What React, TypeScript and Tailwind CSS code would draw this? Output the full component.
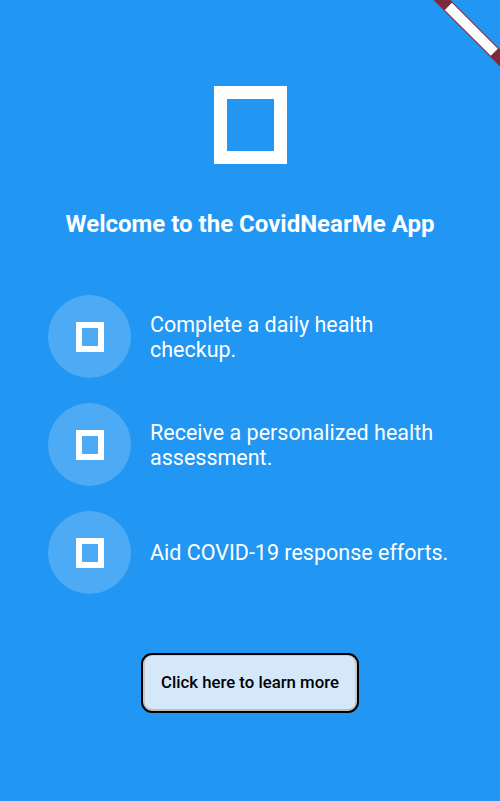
import React from "react";

const items = [
  "Complete a daily health checkup.",
  "Receive a personalized health assessment.",
  "Aid COVID-19 response efforts.",
];

export default function App() {
  return (
    <div
      className="relative w-full h-[801px] overflow-hidden bg-[#2196F3] flex flex-col items-center pt-[86px]"
      style={{ fontFamily: "Roboto, 'Noto Sans', sans-serif" }}
    >
      <div className="w-[73px] h-[78px] border-[13px] border-white" />
      <h1 className="mt-[46px] text-white font-bold text-[24px] leading-[28px] text-center whitespace-nowrap">
        Welcome to the CovidNearMe App
      </h1>
      <div className="mt-[57px] w-full flex flex-col gap-[25px] pl-[48px] pr-[48px]">
        {items.map((t) => (
          <div key={t} className="flex items-center gap-[19px]">
            <div className="w-[83px] h-[83px] rounded-full bg-[#4DABF5] flex items-center justify-center shrink-0">
              <div className="w-[28px] h-[30px] border-[6px] border-white" />
            </div>
            <p className="flex-1 text-white text-[21.5px] leading-[25px]">{t}</p>
          </div>
        ))}
      </div>
      <button className="mt-[59px] w-[218px] h-[60px] rounded-[11px] border-2 border-black bg-[#D4E8FA] shadow-[inset_0_-2px_0_#bdbdbd,inset_2px_0_0_#c8c8c8,inset_-2px_0_0_#c8c8c8,inset_0_1px_0_#cfcfcf] text-black text-[16.75px] font-medium">
        Click here to learn more
      </button>
      <div className="absolute left-[410.75px] top-[23.25px] w-[120px] h-[12px] rotate-45 bg-[#7D2A3C] flex items-center justify-center">
        <div className="w-[65px] h-[10px] bg-white" />
      </div>
    </div>
  );
}
